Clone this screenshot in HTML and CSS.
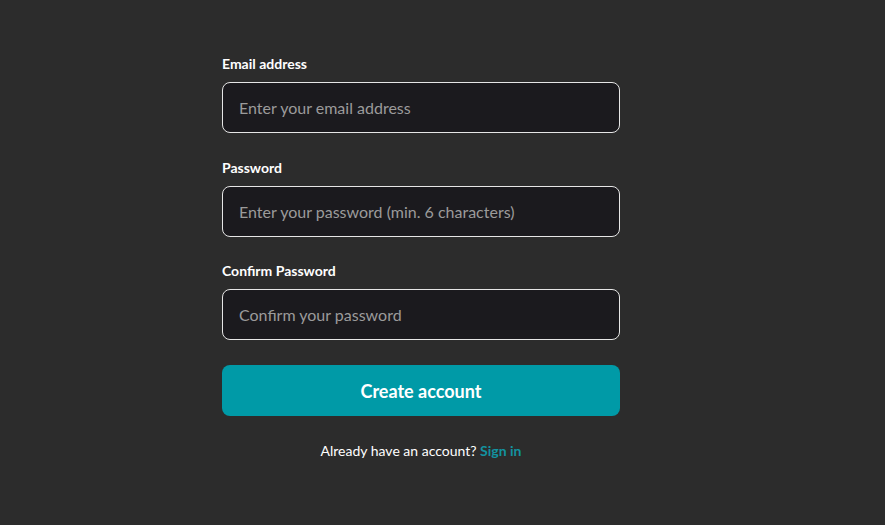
FILE: index.html
```html
<!DOCTYPE html>
<html>
<head>
<meta charset="utf-8">
<link rel="stylesheet" href="styles.css">
</head>
<body>
<main class="page">
  <form class="form">
    <div class="field">
      <label class="label">Email address</label>
      <input class="input" type="email" placeholder="Enter your email address">
    </div>
    <div class="field">
      <label class="label">Password</label>
      <input class="input" type="password" placeholder="Enter your password (min. 6 characters)">
    </div>
    <div class="field field-last">
      <label class="label">Confirm Password</label>
      <input class="input" type="password" placeholder="Confirm your password">
    </div>
    <button class="submit" type="button">Create account</button>
    <p class="alt">Already have an account? <a class="link" href="#">Sign in</a></p>
  </form>
</main>
</body>
</html>
```
FILE: styles.css
```css
html, body {
  margin: 0;
  padding: 0;
  background: #2c2c2c;
  height: 100%;
}
body {
  font-family: "Lato", "Open Sans", sans-serif;
  color: #ffffff;
}
.page {
  display: flex;
  padding-top: 55px;
  padding-left: 222px;
}
.form {
  width: 398px;
  display: flex;
  flex-direction: column;
}
.field {
  display: flex;
  flex-direction: column;
}
.field + .field {
  margin-top: 26px;
}
.field + .field-last {
  margin-top: 25px;
}
.label {
  font-size: 14px;
  font-weight: 700;
  line-height: 18px;
  margin-bottom: 9px;
}
.input {
  box-sizing: border-box;
  height: 51px;
  width: 100%;
  background: #1b1a1e;
  border: 1px solid #e6e6e6;
  border-radius: 8px;
  padding: 0 16px;
  font-family: inherit;
  font-size: 16px;
  color: #fff;
  outline: none;
}
.input::placeholder {
  color: #9b9b9b;
}
.submit {
  margin-top: 25px;
  height: 51px;
  border: none;
  border-radius: 8px;
  background: #009aa7;
  color: #fff;
  font-family: inherit;
  font-size: 18px;
  font-weight: 700;
  cursor: pointer;
}
.alt {
  margin: 26px 0 0;
  text-align: center;
  font-size: 14px;
  line-height: 18px;
}
.link {
  color: #1393a0;
  font-weight: 700;
  text-decoration: none;
}
```
